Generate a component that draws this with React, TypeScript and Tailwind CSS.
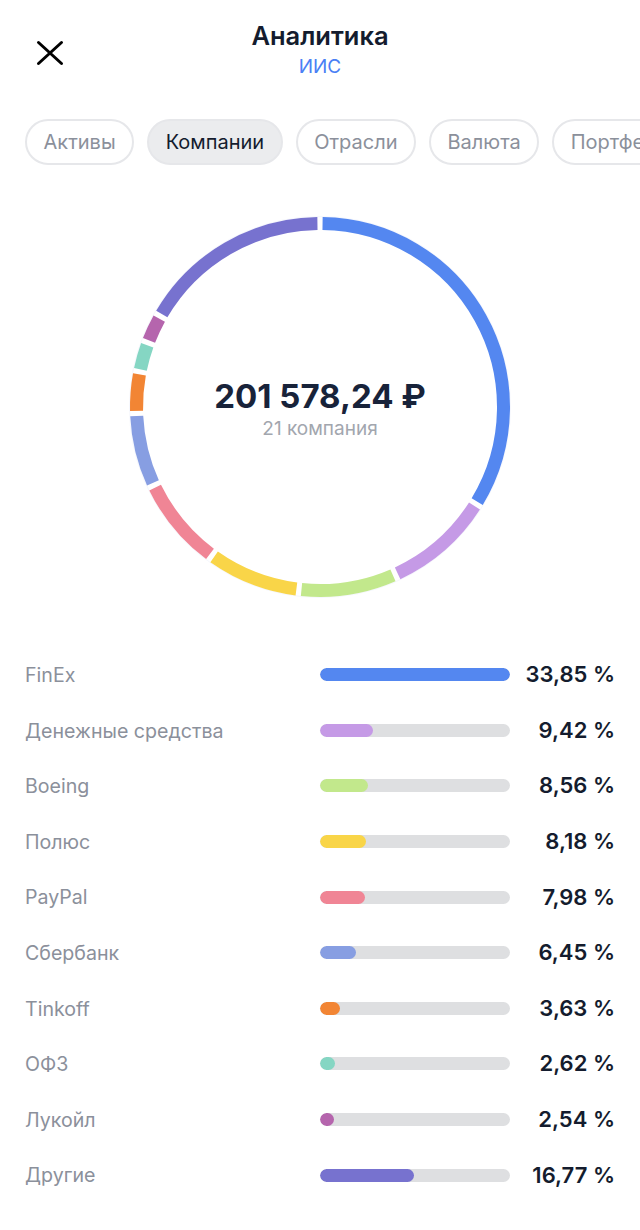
import React from "react";

const rows = [
  { name: "FinEx", pct: 33.85, value: "33,85 %", color: "#5487f0", w: 190 },
  { name: "Денежные средства", pct: 9.42, value: "9,42 %", color: "#c59ae6", w: 53 },
  { name: "Boeing", pct: 8.56, value: "8,56 %", color: "#c2e88c", w: 48 },
  { name: "Полюс", pct: 8.18, value: "8,18 %", color: "#f9d548", w: 46 },
  { name: "PayPal", pct: 7.98, value: "7,98 %", color: "#f08595", w: 45 },
  { name: "Сбербанк", pct: 6.45, value: "6,45 %", color: "#879ee2", w: 36 },
  { name: "Tinkoff", pct: 3.63, value: "3,63 %", color: "#f28534", w: 20 },
  { name: "ОФЗ", pct: 2.62, value: "2,62 %", color: "#85d6c3", w: 15 },
  { name: "Лукойл", pct: 2.54, value: "2,54 %", color: "#b565ad", w: 14 },
  { name: "Другие", pct: 16.77, value: "16,77 %", color: "#7772cf", w: 94 },
];

const chips = ["Активы", "Компании", "Отрасли", "Валюта", "Портфели"];

const R = 183.5;
const C = 190;

function pt(deg: number) {
  const a = (deg * Math.PI) / 180;
  return [C + R * Math.sin(a), C - R * Math.cos(a)];
}

function Ring() {
  let cum = 0;
  return (
    <svg width="380" height="380" viewBox="0 0 380 380" className="block overflow-visible">
      <circle cx={C} cy={C} r="190.5" fill="none" stroke="#f5f7fd" strokeWidth="1" />
      {rows.map((r) => {
        const a0 = (cum / 100) * 360 + 0.8;
        cum += r.pct;
        const a1 = (cum / 100) * 360 - 0.8;
        const [x0, y0] = pt(a0);
        const [x1, y1] = pt(a1);
        const large = a1 - a0 > 180 ? 1 : 0;
        return (
          <path
            key={r.name}
            d={`M${x0} ${y0}A${R} ${R} 0 ${large} 1 ${x1} ${y1}`}
            fill="none"
            stroke={r.color}
            strokeWidth="13"
          />
        );
      })}
    </svg>
  );
}

export default function App() {
  return (
    <div className="w-[640px] h-[1230px] overflow-hidden bg-white font-['Inter','Noto_Sans',sans-serif]">
      <header className="relative h-[119px] flex flex-col items-center pt-[19px]">
        <div className="text-[25.5px] leading-[34px] font-semibold text-[#141c2e]">Аналитика</div>
        <div className="text-[19px] leading-[26px] mt-[1px] text-[#4a80f5]">ИИС</div>
        <svg className="absolute left-[36px] top-[40px]" width="28" height="26" viewBox="0 0 28 26" fill="none">
          <path d="M2.5 2.5L25.5 23.5M25.5 2.5L2.5 23.5" stroke="#000" strokeWidth="3" strokeLinecap="round" />
        </svg>
      </header>

      <div className="flex gap-[13px] pl-[25px] overflow-hidden h-[46px]">
        {chips.map((c) => (
          <div
            key={c}
            className={`shrink-0 h-[46px] px-[16.5px] flex items-center rounded-full border-2 border-[#e6e7ea] text-[20px] ${
              c === "Компании" ? "bg-[#ebecee] text-[#141c2e]" : "text-[#8b909b]"
            }`}
          >
            {c}
          </div>
        ))}
      </div>

      <div className="relative w-[380px] h-[380px] mx-auto mt-[52px]">
        <Ring />
        <div className="absolute inset-0 flex flex-col items-center pt-[156px]">
          <div className="text-[33px] leading-[46px] font-bold text-[#18233a] whitespace-nowrap">201 578,24 ₽</div>
          <div className="text-[19px] leading-[24px] mt-[-2px] text-[#a2a6ae]">21 компания</div>
        </div>
      </div>

      <div className="flex flex-col mt-[50px]">
        {rows.map((r) => (
          <div key={r.name} className="flex items-center h-[55.6px] pl-[25px] pr-[25px]">
            <div className="w-[295px] text-[19.6px] pt-[2px] text-[#8b909b]">{r.name}</div>
            <div className="w-[190px] h-[13px] rounded-full bg-[#dedfe1] overflow-hidden">
              <div className="h-full rounded-full" style={{ width: r.w, backgroundColor: r.color }} />
            </div>
            <div className="flex-1 text-right text-[22px] font-semibold text-[#141c2e] whitespace-nowrap">{r.value}</div>
          </div>
        ))}
      </div>
    </div>
  );
}
